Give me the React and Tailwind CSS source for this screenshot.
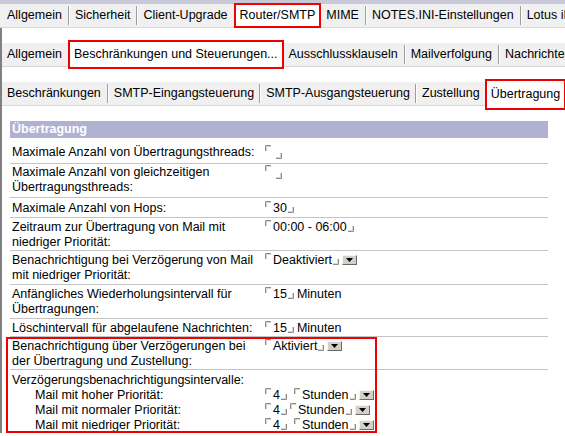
import { Fragment } from "react";

const ROW1 = [
  { label: "Allgemein" },
  { label: "Sicherheit" },
  { label: "Client-Upgrade" },
  { label: "Router/SMTP", selected: true },
  { label: "MIME" },
  { label: "NOTES.INI-Einstellungen" },
  { label: "Lotus iNotes" },
];

const ROW2 = [
  { label: "Allgemein" },
  { label: "Beschränkungen und Steuerungen...", selected: true },
  { label: "Ausschlussklauseln" },
  { label: "Mailverfolgung" },
  { label: "Nachrichtenverfolgung" },
];

const ROW3 = [
  { label: "Beschränkungen" },
  { label: "SMTP-Eingangsteuerung" },
  { label: "SMTP-Ausgangsteuerung" },
  { label: "Zustellung" },
  { label: "Übertragung", selected: true },
];

function Sep() {
  return (
    <span className="self-center h-[19px] w-[2px] shrink-0 border-l border-r border-l-[#9c9c9c] border-r-white" />
  );
}

function TabRow({ tabs, selClass, first = "pl-[7px]", pad = "pl-[5px] pr-[6px]" }) {
  return (
    <div className="flex h-[24px] items-stretch bg-[#f0f0f0] border-b border-[#d9d9d9] whitespace-nowrap">
      {tabs.map((t, i) => {
        const next = tabs[i + 1];
        return (
          <Fragment key={t.label}>
            {t.selected ? (
              <div
                className={`relative z-10 flex shrink-0 items-center bg-white border-2 border-[#f00000] px-[4px] ${selClass}`}
              >
                {t.label}
              </div>
            ) : (
              <div className={`flex shrink-0 items-center ${i === 0 ? `${first} pr-[6px]` : pad}`}>
                {t.label}
              </div>
            )}
            {!t.selected && next && !next.selected && <Sep />}
          </Fragment>
        );
      })}
    </div>
  );
}

// Notes field markers
function TL() {
  return (
    <svg width="6" height="6" viewBox="0 0 6 6" className="shrink-0 self-start">
      <path d="M0.5 6V0.5H6" stroke="#8c8c8c" fill="none" />
      <path d="M1.5 6V1.5H6" stroke="#d4d4d4" fill="none" />
    </svg>
  );
}

function BR({ className = "mb-[3px]" }) {
  return (
    <svg width="6" height="6" viewBox="0 0 6 6" className={`shrink-0 self-end ml-[1px] ${className}`}>
      <path d="M0 5.5H5.5V0" stroke="#8c8c8c" fill="none" />
      <path d="M0 4.5H4.5V0" stroke="#d4d4d4" fill="none" />
    </svg>
  );
}

function Field({ children, className = "" }) {
  return (
    <span className={`inline-flex h-[15px] ${className}`}>
      <TL />
      <span className="ml-[2px]">{children}</span>
      <BR />
    </span>
  );
}

function EmptyField() {
  return (
    <span className="inline-flex h-[15px]">
      <TL />
      <span className="w-[4px]" />
      <BR className="mb-[1px]" />
    </span>
  );
}

function Drop() {
  return (
    <span className="ml-[3px] self-end mb-[3px] inline-flex h-[10px] w-[15px] shrink-0 items-center justify-center bg-[#d4d0c8] border border-t-[#f4f4f4] border-l-[#f4f4f4] border-b-[#6a6a6a] border-r-[#6a6a6a]">
      <svg width="7" height="4" viewBox="0 0 7 4">
        <path d="M0 0H7L3.5 4Z" fill="#000" />
      </svg>
    </span>
  );
}

function Row({ lines, value, pad }) {
  return (
    <div className={`grid grid-cols-[255px_1fr] border-b border-[#c4c4c4] ${pad}`}>
      <div className="pl-[2px]">
        {lines.map((l) => (
          <div key={l}>{l}</div>
        ))}
      </div>
      <div className="flex items-start">{value}</div>
    </div>
  );
}

function SubRow({ label, tight }) {
  return (
    <div className="grid grid-cols-[253px_1fr]">
      <div className="pl-[23px]">{label}</div>
      <div className="flex items-start">
        <Field>4</Field>
        <span className={tight ? "w-[3px]" : "w-[7px]"} />
        <span className="inline-flex h-[15px]">
          <TL />
          <span className="ml-[2px]">Stunden</span>
          <BR />
          <Drop />
        </span>
      </div>
    </div>
  );
}

export default function App() {
  return (
    <div className="w-[565px] h-[436px] overflow-hidden bg-white text-black text-[12.5px] leading-[15px] font-['Liberation_Sans',Arial,sans-serif]">
      <div className="h-[4px] bg-[#c8c8d8]" />
      <TabRow tabs={ROW1} selClass="-my-[1px]" />

      <div className="border-l-2 border-[#808080] pt-[15px]">
        <TabRow tabs={ROW2} selClass="-my-[3px]" first="pl-[5px]" />
        <div className="mt-[15px]">
          <TabRow
            tabs={ROW3}
            selClass="-mt-[3px] -mb-[5px]"
            first="pl-[5px]"
            pad="pl-[5px] pr-[5px]"
          />
        </div>

        <div className="ml-[8px] mt-[15px] w-[538px]">
          <div className="h-[17px] bg-[#b1b1d1] pl-[2px] font-bold text-white leading-[17px]">
            Übertragung
          </div>

          <Row
            lines={["Maximale Anzahl von Übertragungsthreads:"]}
            value={<EmptyField />}
            pad="pt-[7px] pb-[3px]"
          />
          <Row
            lines={["Maximale Anzahl von gleichzeitigen", "Übertragungsthreads:"]}
            value={<EmptyField />}
            pad="pt-[1px] pb-[2px]"
          />
          <Row
            lines={["Maximale Anzahl von Hops:"]}
            value={<Field>30</Field>}
            pad="pt-[3px] pb-[1px]"
          />
          <Row
            lines={["Zeitraum zur Übertragung von Mail mit", "niedriger Priorität:"]}
            value={<Field>00:00 - 06:00</Field>}
            pad="pt-[2px]"
          />
          <Row
            lines={["Benachrichtigung bei Verzögerung von Mail", "mit niedriger Priorität:"]}
            value={
              <span className="inline-flex h-[15px]">
                <TL />
                <span className="ml-[2px]">Deaktiviert</span>
                <BR />
                <Drop />
              </span>
            }
            pad="pt-[2px] pb-[1px]"
          />
          <Row
            lines={["Anfängliches Wiederholungsintervall für", "Übertragungen:"]}
            value={
              <>
                <Field>15</Field>
                <span className="ml-[3px]">Minuten</span>
              </>
            }
            pad="pt-[2px] pb-[1px]"
          />
          <Row
            lines={["Löschintervall für abgelaufene Nachrichten:"]}
            value={
              <>
                <Field>15</Field>
                <span className="ml-[3px]">Minuten</span>
              </>
            }
            pad="pt-[2px]"
          />

          <div className="relative">
            <Row
              lines={["Benachrichtigung über Verzögerungen bei", "der Übertragung und Zustellung:"]}
              value={
                <span className="inline-flex h-[15px]">
                  <TL />
                  <span className="ml-[2px]">Aktiviert</span>
                  <BR />
                  <Drop />
                </span>
              }
              pad="pt-[2px]"
            />
            <div className="pt-[3px] pl-[2px]">
              <div>Verzögerungsbenachrichtigungsintervalle:</div>
              <SubRow label="Mail mit hoher Priorität:" />
              <SubRow label="Mail mit normaler Priorität:" tight />
              <SubRow label="Mail mit niedriger Priorität:" />
            </div>
            <div className="pointer-events-none absolute -left-[4px] top-0 bottom-0 w-[371px] border-2 border-[#f00000]" />
          </div>
        </div>
      </div>
    </div>
  );
}
